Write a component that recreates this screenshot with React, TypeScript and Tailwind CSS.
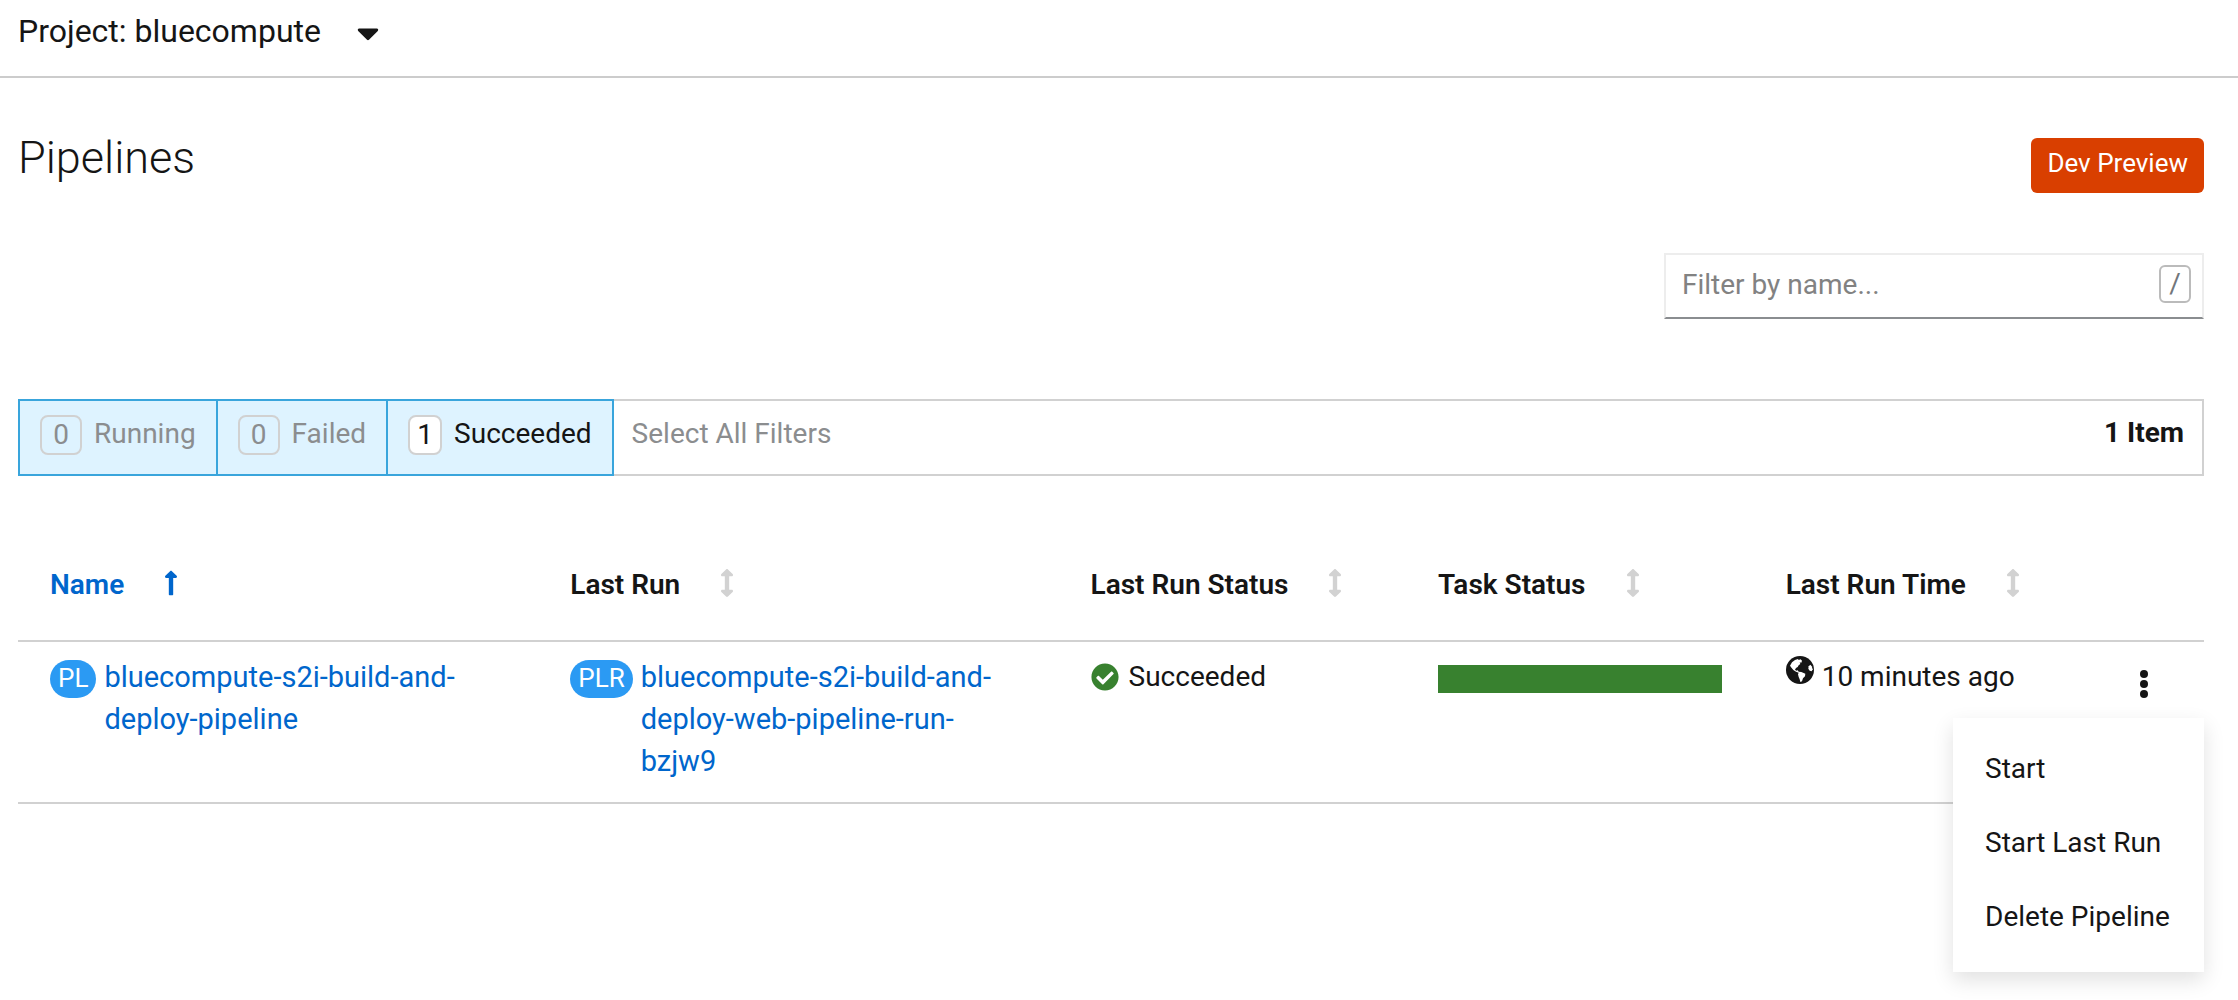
import React from "react";
import {
  FaArrowsAltV,
  FaCaretDown,
  FaCheckCircle,
  FaLongArrowAltUp,
} from "react-icons/fa";

const filters = [
  { label: "Running", count: 0 },
  { label: "Failed", count: 0 },
  { label: "Succeeded", count: 1 },
];

const columns = [
  { label: "Name", width: "w-[23.8%]", sorted: true },
  { label: "Last Run", width: "w-[23.8%]", sorted: false },
  { label: "Last Run Status", width: "w-[15.9%]", sorted: false },
  { label: "Task Status", width: "w-[15.9%]", sorted: false },
  { label: "Last Run Time", width: "w-[15.9%]", sorted: false },
];

const actions = ["Start", "Start Last Run", "Delete Pipeline"];

function GlobeIcon() {
  return (
    <svg viewBox="0 0 84 84" className="size-7 shrink-0" aria-hidden="true">
      <circle cx="42" cy="42" r="42" fill="currentColor" />
      <path
        fill="#fff"
        d="M12 29 L18 19 L27 12 L36 9 L38 12 L44 10 L48 14 L46 20 L41 19 L43 24 L38 28 L35 33 L30 36 L27 41 L31 44 L35 43 L38 47 L46 48 L58 53 L57 61 L51 67 L48 76 L43 78 L41 70 L38 63 L36 55 L38 50 L30 47 L22 42 L17 36 Z"
      />
      <path fill="#fff" d="M73 26 L77 31 L80 40 L77 46 L71 44 L67 38 L68 31 Z" />
    </svg>
  );
}

function ResourceLink({ kind, name }: { kind: string; name: string }) {
  return (
    <div className="flex items-start gap-2">
      <span className="mt-1 flex h-[38px] shrink-0 items-start justify-center rounded-full bg-[#2b9af3] px-2 text-[26px] leading-9 text-white">
        {kind}
      </span>
      <a href="#resource" className="text-[29px] text-[#06c]">
        {name}
      </a>
    </div>
  );
}

export default function App() {
  return (
    <div className="min-h-screen bg-white font-[Roboto,'Liberation_Sans',sans-serif] text-[28px] leading-[42px] text-[#151515]">
      <header className="flex border-b-2 border-[#ccc] px-[18px] pt-[7px] pb-[21px]">
        <button type="button" className="flex items-center gap-9 text-[32px] leading-12">
          Project: bluecompute
          <FaCaretDown className="mt-1 h-9 w-[22px]" />
        </button>
      </header>

      <main className="pr-[34px] pl-[18px]">
        <div className="flex items-start justify-between pt-[60px]">
          <h1 className="text-[45px] leading-10 font-light">Pipelines</h1>
          <span className="rounded-md bg-[#d93f00] px-4 pt-1 pb-[9px] text-[26px] text-white">
            Dev Preview
          </span>
        </div>

        <div className="mt-[60px] flex justify-end">
          <div className="relative w-[540px]">
            <input
              type="text"
              aria-label="Filter by name"
              placeholder="Filter by name..."
              className="h-[66px] w-full border-2 border-[#ededed] border-b-[#8a8d90] pr-14 pb-1 pl-4 outline-none placeholder:text-[#828282]"
            />
            <kbd className="absolute top-3 right-[13px] flex h-[38px] w-8 items-center justify-center rounded-md border-2 border-[#bbb] font-[Roboto,'Liberation_Sans',sans-serif] text-[#72767b]">
              /
            </kbd>
          </div>
        </div>

        <div className="mt-20 flex h-[77px] items-stretch border-2 border-[#d1d1d1]">
          <div className="-my-0.5 -ml-0.5 flex border-2 border-[#39a5dc] bg-[#def3ff]">
            {filters.map((filter) => (
              <button
                key={filter.label}
                type="button"
                className={
                  "flex items-start gap-3 border-[#39a5dc] px-5 pt-3.5 leading-[38px] not-last:border-r-2 " +
                  (filter.count ? "text-[#151515]" : "text-[#8b8d8f]")
                }
              >
                <span
                  className={
                    "flex h-10 items-center justify-center rounded-lg border-2 border-[#d1d1d1] " +
                    (filter.count ? "w-[34px] bg-white" : "w-[42px]")
                  }
                >
                  {filter.count}
                </span>
                {filter.label}
              </button>
            ))}
          </div>
          <button type="button" className="px-[18px] pb-2 text-[#8b8d8f]">
            Select All Filters
          </button>
          <span className="mr-[18px] ml-auto self-center pb-2.5 font-bold">1 Item</span>
        </div>

        <table className="mt-[72px] w-full table-fixed border-collapse text-left">
          <thead>
            <tr className="border-b-2 border-[#d1d1d1]">
              {columns.map((column) => (
                <th
                  key={column.label}
                  scope="col"
                  className={"px-8 pt-4 pb-[34px] font-semibold " + column.width}
                >
                  <button
                    type="button"
                    className={
                      "flex items-center gap-10 whitespace-nowrap " +
                      (column.sorted ? "text-[#06c]" : "")
                    }
                  >
                    {column.label}
                    {column.sorted ? (
                      <FaLongArrowAltUp className="mb-1 h-7 w-3.5" />
                    ) : (
                      <FaArrowsAltV className="mb-1 h-7 w-3.5 text-[#d2d2d2]" />
                    )}
                  </button>
                </th>
              ))}
              <th scope="col" aria-label="Actions" />
            </tr>
          </thead>
          <tbody>
            <tr className="border-b-2 border-[#d1d1d1] align-top">
              <td className="px-8 pt-3.5 pb-5">
                <ResourceLink kind="PL" name="bluecompute-s2i-build-and-deploy-pipeline" />
              </td>
              <td className="px-8 pt-3.5 pb-5">
                <ResourceLink
                  kind="PLR"
                  name="bluecompute-s2i-build-and-deploy-web-pipeline-run-bzjw9"
                />
              </td>
              <td className="px-8 pt-3.5">
                <div className="flex items-center gap-2.5">
                  <FaCheckCircle className="size-7 text-[#38812f]" />
                  Succeeded
                </div>
              </td>
              <td className="px-8 pt-[23px]">
                <div
                  role="img"
                  aria-label="All tasks succeeded"
                  className="h-7 w-full bg-[#38812f]"
                />
              </td>
              <td className="px-8 pt-3.5">
                <div className="flex items-start gap-2 whitespace-nowrap">
                  <GlobeIcon />
                  10 minutes ago
                </div>
              </td>
              <td className="relative pt-6">
                <button
                  type="button"
                  aria-label="Pipeline actions"
                  aria-expanded="true"
                  className="mr-10 ml-auto flex w-10 flex-col items-center gap-0.5 py-1"
                >
                  <span className="size-2 rounded-full bg-current" />
                  <span className="size-2 rounded-full bg-current" />
                  <span className="size-2 rounded-full bg-current" />
                </button>
                <ul
                  role="menu"
                  className="absolute top-[76px] right-0 w-[251px] bg-white pt-3.5 pb-[18px] text-left shadow-[0_8px_20px_rgba(3,3,3,0.12)]"
                >
                  {actions.map((action) => (
                    <li key={action} role="none">
                      <button
                        type="button"
                        role="menuitem"
                        className="w-full px-8 py-4 text-left whitespace-nowrap"
                      >
                        {action}
                      </button>
                    </li>
                  ))}
                </ul>
              </td>
            </tr>
          </tbody>
        </table>
      </main>
    </div>
  );
}
